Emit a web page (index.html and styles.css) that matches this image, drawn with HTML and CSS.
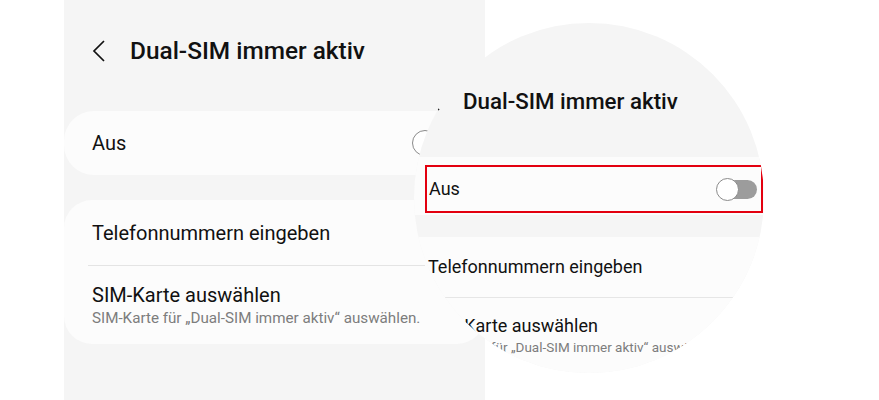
FILE: index.html
```html
<!DOCTYPE html>
<html lang="de">
<head>
<meta charset="utf-8">
<title>Dual-SIM immer aktiv</title>
<link rel="stylesheet" href="styles.css">
</head>
<body>
<div class="stage">
  <section class="panel">
    <header class="head">
      <svg class="back" width="14" height="22" viewBox="0 0 14 22"><path d="M12 1 L2 11 L12 21" fill="none" stroke="#111" stroke-width="1.7"/></svg>
      <h1 class="title">Dual-SIM immer aktiv</h1>
    </header>
    <div class="card card-single">
      <span class="label">Aus</span>
      <span class="toggle"><span class="thumb"></span></span>
    </div>
    <div class="card card-list">
      <div class="row row-one"><span class="label">Telefonnummern eingeben</span></div>
      <div class="divider"></div>
      <div class="row row-two">
        <span class="label">SIM-Karte auswählen</span>
        <span class="sub">SIM-Karte für „Dual-SIM immer aktiv“ auswählen.</span>
      </div>
    </div>
  </section>

  <div class="lens">
    <header class="lens-head">
      <svg class="lens-back" width="13" height="20" viewBox="0 0 13 20"><path d="M11 1 L2 10 L11 19" fill="none" stroke="#111" stroke-width="1.7"/></svg>
      <h2 class="lens-title">Dual-SIM immer aktiv</h2>
    </header>
    <div class="lens-card lens-single">
      <div class="highlight">
        <span class="lens-label">Aus</span>
        <span class="lens-toggle"><span class="lens-thumb"></span></span>
      </div>
    </div>
    <div class="lens-card lens-list">
      <div class="lens-row lens-row-one"><span class="lens-label">Telefonnummern eingeben</span></div>
      <div class="lens-divider"></div>
      <div class="lens-row lens-row-two">
        <span class="lens-label">SIM-Karte auswählen</span>
        <span class="lens-sub">SIM-Karte für „Dual-SIM immer aktiv“ auswählen.</span>
      </div>
    </div>
  </div>
</div>
</body>
</html>
```

FILE: styles.css
```css
* { box-sizing: border-box; margin: 0; padding: 0; }
html, body { width: 879px; height: 400px; overflow: hidden; background: #fff; }
body { font-family: Roboto, "Noto Sans", "Liberation Sans", sans-serif; color: #111; }

.stage { position: relative; width: 879px; height: 400px; }

.panel {
  margin-left: 64px;
  width: 421px;
  height: 400px;
  background: #f5f5f5;
  display: flex;
  flex-direction: column;
}

.head {
  height: 100px;
  display: flex;
  align-items: center;
  padding: 2px 0 0 28px;
}
.back { margin-right: 24px; }
.title { font-size: 24.4px; font-weight: 500; line-height: 28px; color: #111; }

.card { background: #fcfcfc; border-radius: 30px; }
.card-single {
  margin-top: 11px;
  height: 64px;
  display: flex;
  align-items: center;
  justify-content: space-between;
  padding: 0 0 0 28px;
  width: 440px;
}
.label { font-size: 20px; line-height: 24px; color: #111; }

.toggle {
  width: 48px; height: 22px; border-radius: 11px; background: #9c9c9c;
  position: relative; margin-right: 42px;
}
.thumb {
  position: absolute; left: -2px; top: -2px; width: 26px; height: 26px;
  border-radius: 50%; background: #fff; border: 1.5px solid #8a8a8a;
}

.card-list {
  margin-top: 25px;
  height: 144px;
  display: flex;
  flex-direction: column;
  border-radius: 28px;
}
.row { display: flex; flex-direction: column; justify-content: center; padding-left: 28px; }
.row-one { height: 65px; }
.divider { height: 1px; background: #e4e4e4; margin: 0 60px 0 24px; }
.row-two { height: 78px; padding-top: 1px; }
.sub { font-size: 15.2px; line-height: 20px; color: #7d7d7d; margin-top: 1px; }

/* magnifier */
.lens {
  position: absolute;
  left: 414px;
  top: 23px;
  width: 350px;
  height: 350px;
  border-radius: 50%;
  overflow: hidden;
  background: #f5f5f5;
  display: flex;
  flex-direction: column;
}
.lens-head {
  display: flex;
  align-items: center;
  margin-top: 66px;
  height: 24px;
  padding-left: 14px;
}
.lens-back { margin-right: 22px; }
.lens-title { font-size: 22.3px; font-weight: 500; line-height: 26px; color: #111; }

.lens-card { background: #fcfcfc; }
.lens-single { margin-top: 44px; height: 58px; padding: 8px 1px 0 11px; }
.highlight {
  height: 48px;
  border: 2px solid #e3000f;
  display: flex;
  align-items: center;
  justify-content: space-between;
  padding: 0 4px 0 2px;
}
.lens-label { font-size: 18px; line-height: 22px; color: #111; }
.lens-toggle {
  width: 40px; height: 19px; border-radius: 10px; background: #9c9c9c; position: relative;
}
.lens-thumb {
  position: absolute; left: -1px; top: -2px; width: 23px; height: 23px;
  border-radius: 50%; background: #fff; border: 1.5px solid #8a8a8a;
}

.lens-list { margin-top: 22px; flex: 1; display: flex; flex-direction: column; }
.lens-row { display: flex; flex-direction: column; justify-content: center; padding-left: 14px; }
.lens-row-one { height: 60px; }
.lens-divider { height: 1px; background: #e6e6e6; margin: 0 31px 0 10px; }
.lens-row-two { height: 62px; padding-top: 12px; }
.lens-sub { font-size: 13.5px; line-height: 18px; color: #7d7d7d; margin-top: 1px; }
```
